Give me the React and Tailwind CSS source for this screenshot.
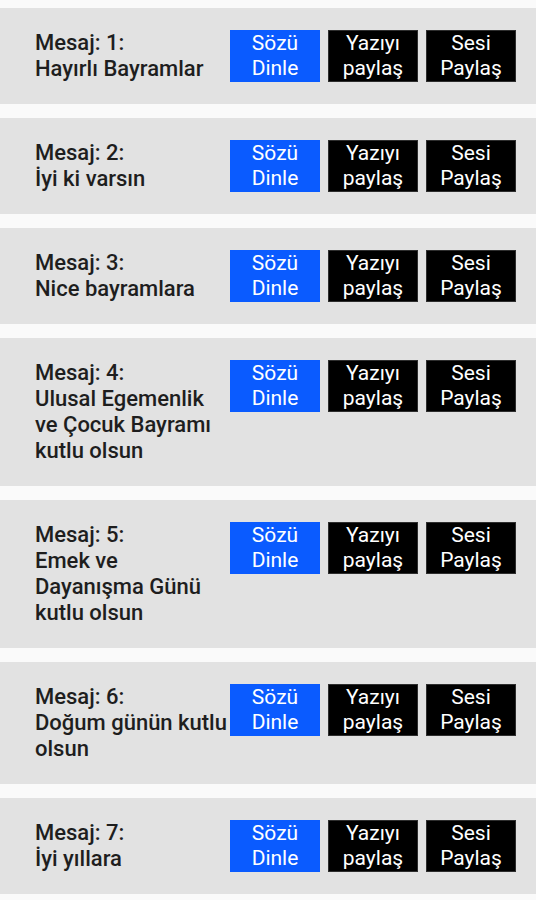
import React from 'react';

const messages = [
  'Hayırlı Bayramlar',
  'İyi ki varsın',
  'Nice bayramlara',
  'Ulusal Egemenlik ve Çocuk Bayramı kutlu olsun',
  'Emek ve Dayanışma Günü kutlu olsun',
  'Doğum günün kutlu olsun',
  'İyi yıllara',
];

const MessageCard = ({ index, text }) => {
  return (
    <div className="flex items-start bg-[#e2e2e2] pl-[35px] pr-[20px] py-[22px]">
      {/* Message text */}
      <div className="flex-1 min-w-0 text-[22px] leading-[26px] font-medium text-[#1e1e1e]">
        <div>Mesaj: {index}:</div>
        <div>{text}</div>
      </div>

      {/* Action buttons */}
      <div className="flex gap-[8px]">
        <button className="w-[90px] h-[52px] bg-[#0a5bff] text-white text-[21px] leading-[25px] flex items-center justify-center text-center">
          Sözü
          <br />
          Dinle
        </button>
        <button className="w-[90px] h-[52px] bg-black border border-[#2e2e2e] text-white text-[21px] leading-[25px] flex items-center justify-center text-center">
          Yazıyı
          <br />
          paylaş
        </button>
        <button className="w-[90px] h-[52px] bg-black border border-[#2e2e2e] text-white text-[21px] leading-[25px] flex items-center justify-center text-center">
          Sesi
          <br />
          Paylaş
        </button>
      </div>
    </div>
  );
};

const App = () => {
  return (
    <div className="min-h-screen bg-[#fafafa] pt-[8px] flex flex-col gap-[14px] font-['Roboto',sans-serif]">
      {messages.map((msg, i) => (
        <MessageCard key={i} index={i + 1} text={msg} />
      ))}
    </div>
  );
};

export default App;
